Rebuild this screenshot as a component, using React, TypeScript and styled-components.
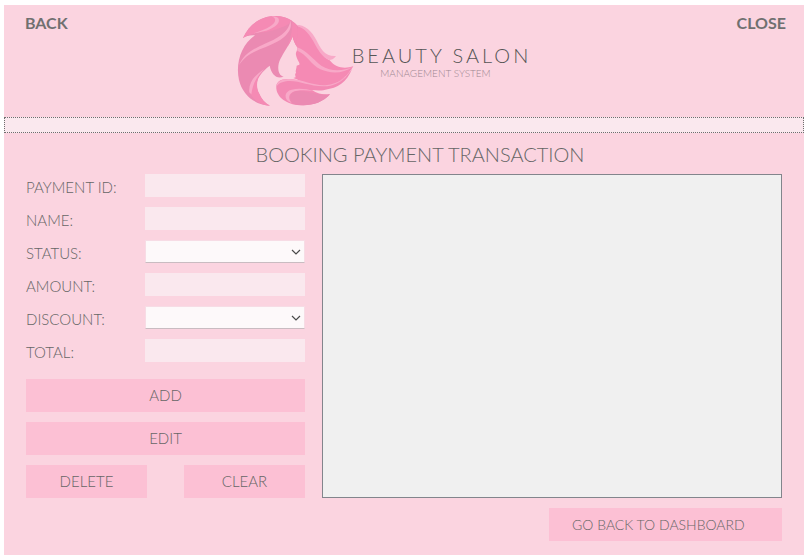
import React from "react";
import styled, { createGlobalStyle } from "styled-components";

const GlobalStyle = createGlobalStyle`
  * { box-sizing: border-box; }
  body {
    margin: 0;
    background: #ffffff;
    color: #666666;
    font-family: "Century Gothic", Lato, "Open Sans", sans-serif;
    font-weight: 300;
  }
  button, input, select { font: inherit; color: inherit; border-radius: 0; }
`;

const Window = styled.div`
  display: flex;
  flex-direction: column;
  min-height: calc(100vh - 8px);
  margin: 5px 3px 3px 4px;
  background: #fbd4e0;
`;

const Header = styled.header`
  display: grid;
  grid-template-columns: 1fr auto 1fr;
  align-items: start;
  height: 112px;
  padding: 0 18px 0 21px;
`;

const NavButton = styled.button<{ $end?: boolean }>`
  justify-self: ${(p) => (p.$end ? "end" : "start")};
  margin-top: 8px;
  padding: 0;
  border: 0;
  background: none;
  color: #707070;
  font-size: 16px;
  line-height: 20px;
  font-weight: 700;
  cursor: pointer;
`;

const Brand = styled.div`
  display: flex;
  align-items: flex-start;
  padding-right: 50px;
`;

const Logo = styled.svg`
  display: block;
  width: 130px;
  height: 110px;
`;

const BrandText = styled.div`
  margin: 38px 0 0 -8px;
  text-align: center;
`;

const BrandName = styled.div`
  color: #555555;
  font-size: 20px;
  line-height: 24px;
  font-weight: 300;
  letter-spacing: 3px;
`;

const BrandSub = styled.div`
  padding-right: 12px;
  color: #9c8790;
  font-size: 10px;
  line-height: 12px;
`;

const Strip = styled.div`
  height: 16px;
  border: 1px dotted #6e6e6e;
  background: #fae8ee;
`;

const Main = styled.main`
  display: grid;
  grid-template-columns: 279px 1fr;
  column-gap: 17px;
  row-gap: 10px;
  padding: 8px 22px 14px;
`;

const Title = styled.h1`
  grid-column: 1 / -1;
  margin: 0;
  padding-left: 32px;
  font-size: 20px;
  line-height: 26px;
  font-weight: 300;
  text-align: center;
`;

const Form = styled.form`
  display: flex;
  flex-direction: column;
  gap: 17px;
  margin-top: -3px;
`;

const Fields = styled.div`
  display: grid;
  gap: 10px;
`;

const Field = styled.div`
  display: grid;
  grid-template-columns: 119px 1fr;
  align-items: center;
  height: 23px;
`;

const Label = styled.label`
  padding-top: 2px;
  font-size: 15px;
  line-height: 20px;
`;

const TextInput = styled.input`
  width: 100%;
  height: 23px;
  padding: 0 4px;
  border: 0;
  background: #fae8ee;
  font-size: 14px;
`;

const SelectWrap = styled.div`
  display: grid;
  align-items: center;

  > * { grid-area: 1 / 1; }
`;

const Select = styled.select`
  appearance: none;
  width: 100%;
  height: 23px;
  padding: 0 20px 0 4px;
  border: 1px solid #f7dce5;
  border-bottom-color: #c9bcc1;
  background: #fdf9fa;
  font-size: 14px;
`;

const Chevron = styled.svg`
  justify-self: end;
  width: 10px;
  height: 6px;
  margin-right: 4px;
  pointer-events: none;
`;

const Actions = styled.div`
  display: grid;
  grid-template-columns: 1fr 1fr;
  column-gap: 37px;
  row-gap: 10px;
`;

const Action = styled.button<{ $wide?: boolean }>`
  grid-column: ${(p) => (p.$wide ? "1 / -1" : "auto")};
  height: 33px;
  padding: 0 0 2px;
  border: 0;
  background: #fcc0d4;
  font-size: 15px;
  line-height: 20px;
  cursor: pointer;
`;

const Records = styled.section`
  margin-top: -3px;
  border: 1px solid #82858c;
  background: #f0f0f0;
`;

const DashboardButton = styled(Action)`
  grid-column: 2;
  justify-self: end;
  width: 233px;
  padding: 0 0 0 23px;
  font-size: 14px;
  text-align: left;
`;

const fields: { id: string; label: string; kind: "text" | "select" }[] = [
  { id: "payment-id", label: "PAYMENT ID:", kind: "text" },
  { id: "name", label: "NAME:", kind: "text" },
  { id: "status", label: "STATUS:", kind: "select" },
  { id: "amount", label: "AMOUNT:", kind: "text" },
  { id: "discount", label: "DISCOUNT:", kind: "select" },
  { id: "total", label: "TOTAL:", kind: "text" },
];

function HairLogo() {
  return (
    <Logo viewBox="0 0 390 330" aria-hidden="true">
      {/* locks flowing to the right of the face */}
      <path
        fill="#f58ab4"
        d="M193 60 C226 60 242 84 258 112 C272 140 284 160 299 166 C318 190 345 192 370 184 C355 208 335 232 300 240 C260 250 222 232 190 219 L197 217 C197 211 193 209 198 203 C195 198 200 190 200 182 L208 179 C211 175 201 165 198 150 C196 142 204 136 201 127 C196 116 188 105 188 95 Z"
      />
      <path
        fill="#f8a9c8"
        d="M193 59 C226 58 244 77 259 105 C272 131 284 155 318 153 C311 162 304 165 298 165 C276 158 263 133 250 109 C234 80 218 65 193 62 Z"
      />
      <path
        fill="#f8a9c8"
        d="M201 127 C232 138 248 163 274 182 C304 201 340 198 369 185 C340 206 303 207 271 193 C241 177 231 149 202 137 Z"
      />
      {/* lower sweep */}
      <path
        fill="#f38ab4"
        d="M139 251 C136 230 153 221 176 222 C222 224 254 245 294 239 C327 235 350 216 367 190 C350 233 323 250 286 254 C267 258 258 256 246 255 C260 266 284 270 300 268 C278 292 248 302 216 301 C177 300 143 282 139 251 Z"
      />
      <path
        fill="#f8a9c8"
        d="M138 249 C139 228 157 220 182 222 C222 225 254 244 291 240 C321 236 339 224 353 209 C334 234 308 243 282 244 C237 245 205 224 168 229 C151 232 142 238 138 249 Z"
      />
      <path
        fill="#f8a9c8"
        d="M180 292 C160 281 163 259 185 254 C207 249 230 252 249 258 C225 255 200 255 187 262 C174 271 175 282 185 294 Z"
      />
      <path
        fill="#eb8ab2"
        d="M187 295 C174 278 180 263 198 259 C230 253 259 273 300 268 C278 292 248 302 216 301 C204 300 195 299 187 295 Z"
      />
      {/* crown and the left side of the hair */}
      <path
        fill="#eb8ab2"
        d="M39 99 C58 57 94 33 136 33 C164 33 190 45 204 65 C201 80 202 103 199 122 C194 112 190 105 189 93 C179 119 162 139 150 164 C141 184 143 211 161 215 C139 224 124 207 119 182 C86 208 70 233 87 265 C94 282 105 295 120 302 C74 301 37 268 27 225 C16 176 33 120 75 91 C59 90 48 93 39 99 Z"
      />
      <path
        fill="#f58ab4"
        d="M39 99 C58 57 94 33 136 33 C157 33 174 39 186 48 C170 66 136 74 109 81 C79 82 55 89 39 99 Z"
      />
      <path
        fill="#f58ab4"
        d="M58 262 C59 238 72 217 96 201 C78 220 78 247 87 265 C94 282 105 295 120 302 C92 301 71 286 58 262 Z"
      />
      <path
        fill="#f8a9c8"
        d="M124 34 C145 33 153 44 142 58 C126 75 98 81 72 85 C101 74 126 66 134 51 C138 43 134 37 124 34 Z"
      />
      <path
        fill="#f8a9c8"
        d="M181 47 C188 70 174 91 144 109 C102 133 54 137 27 181 C40 147 70 132 103 117 C139 101 177 83 181 47 Z"
      />
      <path
        fill="#f8a9c8"
        d="M58 262 C55 234 71 212 104 192 C79 215 68 236 64 268 Z"
      />
      <path
        fill="#f58ab4"
        d="M187 50 C205 58 205 72 202 89 C199 103 202 113 199 122 C193 111 190 104 189 93 C184 106 178 116 172 126 C180 102 188 78 187 50 Z"
      />
    </Logo>
  );
}

export default function App() {
  return (
    <>
      <GlobalStyle />
      <Window>
        <Header>
          <NavButton type="button">BACK</NavButton>
          <Brand>
            <HairLogo />
            <BrandText>
              <BrandName>BEAUTY SALON</BrandName>
              <BrandSub>MANAGEMENT SYSTEM</BrandSub>
            </BrandText>
          </Brand>
          <NavButton type="button" $end>
            CLOSE
          </NavButton>
        </Header>
        <Strip />
        <Main>
          <Title>BOOKING PAYMENT TRANSACTION</Title>
          <Form onSubmit={(e) => e.preventDefault()}>
            <Fields>
              {fields.map((f) => (
                <Field key={f.id}>
                  <Label htmlFor={f.id}>{f.label}</Label>
                  {f.kind === "text" ? (
                    <TextInput id={f.id} name={f.id} type="text" />
                  ) : (
                    <SelectWrap>
                      <Select id={f.id} name={f.id}>
                        <option value="" />
                      </Select>
                      <Chevron viewBox="0 0 10 6" aria-hidden="true">
                        <path d="M1 1 L5 5 L9 1" fill="none" stroke="#4a4a4a" strokeWidth="1.2" />
                      </Chevron>
                    </SelectWrap>
                  )}
                </Field>
              ))}
            </Fields>
            <Actions>
              <Action type="submit" $wide>ADD</Action>
              <Action type="button" $wide>EDIT</Action>
              <Action type="button">DELETE</Action>
              <Action type="reset">CLEAR</Action>
            </Actions>
          </Form>
          <Records aria-label="Transactions" />
          <DashboardButton type="button">GO BACK TO DASHBOARD</DashboardButton>
        </Main>
      </Window>
    </>
  );
}
